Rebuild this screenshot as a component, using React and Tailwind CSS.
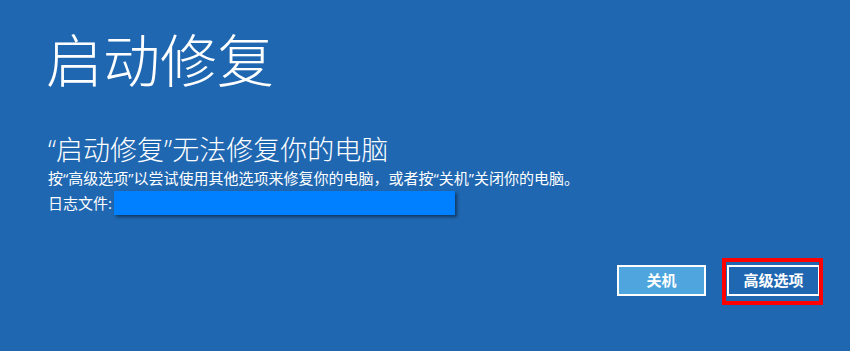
const FONT = {
    fontFamily: '"Open Sans", "Noto Sans CJK SC", sans-serif',
};

export default function App() {
    return (
        <div
            className="w-[850px] h-[351px] bg-[#1f67b1] text-white flex flex-col overflow-hidden"
            style={FONT}
        >
            <div className="pl-[46px] pt-[25px]">
                <h1 className="text-[57px] leading-[70px] font-light">启动修复</h1>
            </div>

            <div className="pl-[48px] pt-[38px]">
                <h2 className="text-[27px] leading-[34px] font-light">“启动修复”无法修复你的电脑</h2>
                <p className="text-[15px] leading-[20px] mt-[1px]">
                    按“高级选项”以尝试使用其他选项来修复你的电脑，或者按“关机”关闭你的电脑。
                </p>
                <div className="flex items-center mt-[3px]">
                    <span className="text-[15px] leading-[24px]">日志文件:</span>
                    <div className="ml-[2px] w-[341px] h-[24px] bg-[#0080ff] shadow-[2px_2px_3px_rgba(0,0,0,0.45)]"></div>
                </div>
            </div>

            <div className="flex-1"></div>

            <div className="flex justify-end items-center gap-[21px] pr-[30px] pb-[55px]">
                <button className="w-[89px] h-[31px] border-2 border-white bg-[#4fa5dd] text-[15px] font-bold text-white">
                    关机
                </button>
                <div className="relative">
                    <button className="w-[93px] h-[31px] border-2 border-white bg-[#1f67b1] text-[15px] font-bold text-white">
                        高级选项
                    </button>
                    <div className="absolute left-[-5px] top-[-7px] w-[101px] h-[47px] border-4 border-[#ff0000] pointer-events-none"></div>
                </div>
            </div>
        </div>
    );
}
